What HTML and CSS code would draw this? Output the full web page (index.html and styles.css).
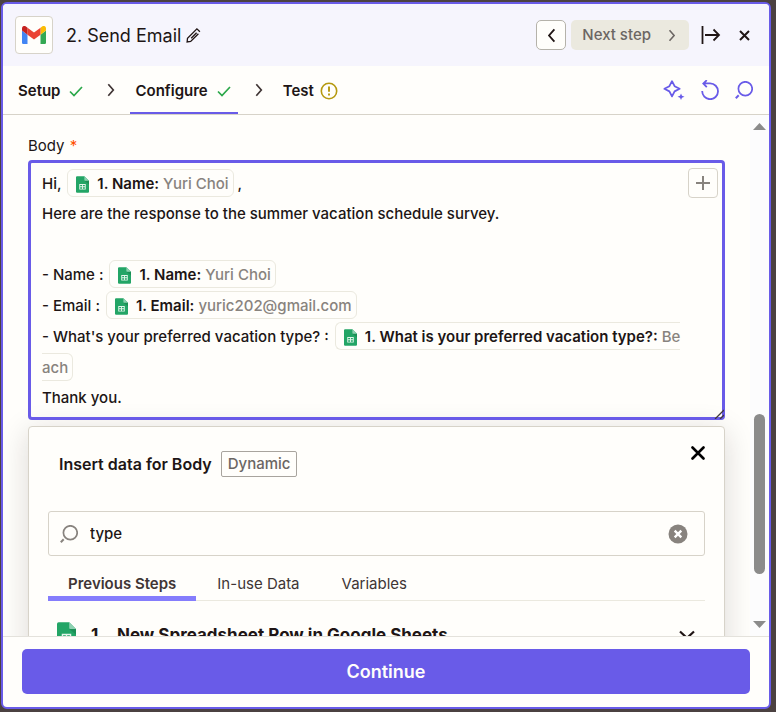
FILE: index.html
```html
<!DOCTYPE html>
<html lang="en">
<head>
<meta charset="utf-8">
<meta name="viewport" content="width=device-width, initial-scale=1">
<title>Send Email</title>
<link rel="stylesheet" href="styles.css">
</head>
<body>
<svg class="defs" aria-hidden="true">
  <symbol id="sheet" viewBox="0 0 14 18">
    <path fill="#23a566" d="M1.2 0H9l5 5v11.8a1.2 1.2 0 0 1-1.2 1.2H1.2A1.2 1.2 0 0 1 0 16.800V1.200A1.200 1.200 0 0 1 1.200 0z"/>
    <path fill="#1c8f56" d="M9 5h5v4z"/>
    <path fill="#8ed1b1" d="M9 0l5 5H9.800A.8.8 0 0 1 9 4.200z"/>
    <path fill="#e4f5ec" fill-rule="evenodd" d="M3.500 8.500h7v6h-7zM4.500 9.500v1.500h2V9.500zM7.500 9.500v1.500h2V9.500zM4.500 12v1.500h2V12zM7.500 12v1.500h2V12z"/>
  </symbol>
  <symbol id="check" viewBox="0 0 14 12"><path d="M1 6.500l4 4L13 2" fill="none" stroke="#2ba84a" stroke-width="1.700"/></symbol>
  <symbol id="chevron" viewBox="0 0 8 14"><path d="M1.300 1.300L6.300 7l-5 5.700" fill="none" stroke="currentColor" stroke-width="1.700"/></symbol>
  <symbol id="search" viewBox="0 0 18 18"><circle cx="10.300" cy="7.700" r="6.900" fill="none" stroke="currentColor" stroke-width="1.700"/><path d="M3.700 14.300L.8 17.200" stroke="currentColor" stroke-width="2"/></symbol>
</svg>
<main class="panel">
  <header class="header">
    <span class="app-logo">
      <svg width="24" height="18" viewBox="0 0 24 18" aria-hidden="true">
        <path fill="#4285f4" d="M1.600 18h3.900V8.700L0 4.600v11.800C0 17.300.7 18 1.600 18z"/>
        <path fill="#34a853" d="M18.500 18h3.900c.9 0 1.600-.7 1.600-1.600V4.600l-5.500 4.100z"/>
        <path fill="#fbbc04" d="M18.500 1.700v7L24 4.600V2.400c0-2-2.300-3.200-3.900-2z"/>
        <path fill="#ea4335" d="M5.500 8.700v-7L12 6.500l6.500-4.800v7L12 13.500z"/>
        <path fill="#c5221f" d="M0 2.400v2.200l5.500 4.100v-7L3.900.4C2.300-.8 0 .4 0 2.400z"/>
      </svg>
    </span>
    <h1 class="title"><span>2.</span><span>Send Email</span></h1>
    <button class="icon-btn rename" aria-label="Rename step">
      <svg width="15" height="15" viewBox="0 0 15 15" aria-hidden="true"><path d="M13.900 3.800L10.900.9 1.500 10.300 1.100 13.900l3.600-.4 7.700-7.700M5.200 10.200l5.400-5.400" fill="none" stroke="currentColor" stroke-width="1.300"/></svg>
    </button>
    <div class="header-actions">
      <button class="back-btn" aria-label="Previous step"><svg class="flip" width="9" height="15" aria-hidden="true"><use href="#chevron"/></svg></button>
      <button class="next-btn">Next step<svg width="8" height="13" aria-hidden="true"><use href="#chevron"/></svg></button>
      <button class="icon-btn collapse" aria-label="Collapse panel"><svg width="20" height="18" viewBox="0 0 20 18" aria-hidden="true"><path d="M1.500 0v18M4 9h14M12.500 3.500L18 9l-5.500 5.500" fill="none" stroke="currentColor" stroke-width="1.800"/></svg></button>
      <button class="icon-btn" aria-label="Close panel"><svg width="11" height="11" viewBox="0 0 11 11" aria-hidden="true"><path d="M1 1l9 9M10 1l-9 9" stroke="currentColor" stroke-width="2"/></svg></button>
    </div>
  </header>
  <nav class="steps" aria-label="Step sections">
    <a class="step" href="#setup">Setup<svg width="14" height="12" aria-hidden="true"><use href="#check"/></svg></a>
    <svg class="divider" width="8" height="14" aria-hidden="true"><use href="#chevron"/></svg>
    <a class="step active" href="#configure" aria-current="step">Configure<svg width="14" height="12" aria-hidden="true"><use href="#check"/></svg></a>
    <svg class="divider" width="8" height="14" aria-hidden="true"><use href="#chevron"/></svg>
    <a class="step warning" href="#test">Test<svg width="18" height="18" viewBox="0 0 18 18" aria-hidden="true"><circle cx="9" cy="9" r="7.700" fill="none" stroke="#b5990f" stroke-width="1.600"/><path d="M9 4.500v5.300M9 11.500v2" stroke="#b5990f" stroke-width="1.900"/></svg></a>
    <div class="tools">
      <button class="icon-btn" aria-label="Suggest with AI"><svg width="22" height="20" viewBox="0 0 22 20" aria-hidden="true"><path d="M9 1.200L11.600 6.200 16.600 8.800 11.600 11.400 9 16.400 6.400 11.400 1.400 8.800 6.400 6.200z" fill="none" stroke="currentColor" stroke-width="1.800" stroke-linejoin="round"/><path d="M18 13.500l1 2.200 2.500 1-2.500 1-1 2.300-1-2.300-2.500-1 2.500-1z" fill="currentColor"/></svg></button>
      <button class="icon-btn" aria-label="Undo"><svg width="18" height="20" viewBox="0 0 18 20" aria-hidden="true"><path d="M1.200 11a7.900 7.900 0 1 0 7.900-7.600H2M5.800.2L2.300 3.500l3.500 3.700" fill="none" stroke="currentColor" stroke-width="1.800"/></svg></button>
      <button class="icon-btn" aria-label="Search"><svg width="18" height="18" aria-hidden="true"><use href="#search"/></svg></button>
    </div>
  </nav>
  <div class="body">
    <section class="form">
      <div class="label" id="body-label">Body <span class="required">*</span></div>
      <div class="editor">
        <div class="text" contenteditable="true" role="textbox" aria-multiline="true" aria-labelledby="body-label" spellcheck="false">
          <p class="with-pill">Hi, <span class="pill"><svg width="13" height="17"><use href="#sheet"/></svg><b>1. Name:</b> <span class="value">Yuri Choi</span></span> ,</p>
          <p>Here are the response to the summer vacation schedule survey.</p>
          <p><br></p>
          <p class="with-pill">- Name : <span class="pill"><svg width="13" height="17"><use href="#sheet"/></svg><b>1. Name:</b> <span class="value">Yuri Choi</span></span></p>
          <p class="with-pill">- Email : <span class="pill"><svg width="13" height="17"><use href="#sheet"/></svg><b>1. Email:</b> <span class="value">yuric202@gmail.com</span></span></p>
          <p class="with-pill">- What's your preferred vacation type? : <span class="pill"><svg width="13" height="17"><use href="#sheet"/></svg><b>1. What is your preferred vacation type?:</b> <span class="value">Beach</span></span></p>
          <p>Thank you.</p>
        </div>
        <button class="add-btn" aria-label="Insert data"><svg width="14" height="14" viewBox="0 0 14 14" aria-hidden="true"><path d="M7 0v14M0 7h14" stroke="currentColor" stroke-width="2"/></svg></button>
        <svg class="grip" width="10" height="10" viewBox="0 0 10 10" aria-hidden="true"><path d="M1 10l9-9M6 10l4-4" stroke="#403838" stroke-width="1.300"/></svg>
      </div>
      <div class="picker">
        <div class="picker-head">
          <h2>Insert data for Body</h2><span class="badge">Dynamic</span>
          <button class="icon-btn picker-close" aria-label="Close picker"><svg width="14" height="14" viewBox="0 0 14 14" aria-hidden="true"><path d="M1.500 1.500l11 11M12.500 1.500l-11 11" stroke="currentColor" stroke-width="2.600" stroke-linecap="round"/></svg></button>
        </div>
        <div class="search">
          <svg width="18" height="18" aria-hidden="true"><use href="#search"/></svg>
          <input type="text" value="type" aria-label="Search data">
          <button class="icon-btn" aria-label="Clear search"><svg width="20" height="20" viewBox="0 0 20 20" aria-hidden="true"><circle cx="10" cy="10" r="9.500" fill="#88837e"/><path d="M6.700 6.700l6.600 6.600M13.300 6.700l-6.600 6.600" stroke="#fff" stroke-width="2.400"/></svg></button>
        </div>
        <div class="tabs" role="tablist">
          <button class="tab selected" role="tab" aria-selected="true">Previous Steps</button>
          <button class="tab" role="tab" aria-selected="false">In-use Data</button>
          <button class="tab" role="tab" aria-selected="false">Variables</button>
        </div>
        <button class="source" aria-expanded="false">
          <svg width="19" height="25" aria-hidden="true"><use href="#sheet"/></svg>
          <span class="source-number">1.</span><span>New Spreadsheet Row in Google Sheets</span>
          <svg class="expand" width="16" height="10" viewBox="0 0 16 10" aria-hidden="true"><path d="M1 1.500l7 6.500 7-6.500" fill="none" stroke="currentColor" stroke-width="2.200"/></svg>
        </button>
      </div>
    </section>
    <div class="scrollbar" aria-hidden="true">
      <svg width="13" height="7" viewBox="0 0 13 7"><path d="M0 7L6.500 0 13 7z" fill="#8b8b8b"/></svg>
      <div class="track"><div class="thumb"></div></div>
      <svg width="13" height="7" viewBox="0 0 13 7"><path d="M0 0L6.500 7 13 0z" fill="#8b8b8b"/></svg>
    </div>
  </div>
  <footer class="footer"><button class="continue">Continue</button></footer>
</main>
</body>
</html>
```
FILE: styles.css
```css
* { box-sizing: border-box; }

body {
  margin: 0;
  height: 100vh;
  padding: 2px 5px 3px 1px;
  background: #4b4141;
  color: #201515;
  font: 15px/20px Inter, "Liberation Sans", sans-serif;
}

button, input { font: inherit; color: inherit; }
button { margin: 0; padding: 0; border: 0; background: none; }
h1, h2, p { margin: 0; }
svg { display: block; flex: none; }
.defs { position: absolute; width: 0; height: 0; }
.icon-btn { display: flex; flex: none; }
.flip { transform: scaleX(-1); }

.panel {
  display: flex;
  flex-direction: column;
  height: 100%;
  overflow: hidden;
  border: 2px solid #695be8;
  border-radius: 6px;
  background: #fffefb;
}

.header {
  display: flex;
  align-items: center;
  flex: none;
  height: 62px;
  padding: 0 19px 0 12px;
  background: #f6f5fd;
}
.app-logo {
  display: grid;
  place-items: center;
  width: 38px;
  height: 38px;
  border: 1px solid #d7d3c9;
  border-radius: 4px;
  background: #fffefb;
}
.title {
  display: flex;
  gap: 5px;
  margin-left: 13px;
  padding-top: 2px;
  font-size: 18px;
  font-weight: 400;
  line-height: 24px;
}
.rename { margin-left: 5px; }
.header-actions { display: flex; align-items: center; margin-left: auto; }
.back-btn {
  display: grid;
  place-items: center;
  width: 30px;
  height: 30px;
  margin-right: 5px;
  border: 1px solid #b5b2aa;
  border-radius: 5px;
  background: #fffefb;
}
.next-btn {
  display: flex;
  align-items: center;
  gap: 17px;
  height: 30px;
  margin-right: 12px;
  padding: 0 13px 0 11px;
  border-radius: 5px;
  background: #ebe9df;
  color: #6b6663;
  font-weight: 500;
}
.collapse { margin-right: 18px; }

.steps {
  display: flex;
  align-items: center;
  flex: none;
  height: 49px;
  padding: 0 16px 0 10px;
  border-bottom: 1px solid #d7d3c9;
}
.step {
  display: flex;
  align-items: center;
  gap: 9px;
  align-self: stretch;
  padding: 4px 7px 0 5px;
  border-bottom: 2px solid transparent;
  color: inherit;
  font-weight: 600;
  text-decoration: none;
}
.step.active { border-color: #695be8; }
.step.warning { gap: 6px; }
.divider { margin: 0 15px 0 17px; color: #403535; }
.tools { display: flex; align-items: center; gap: 16px; margin-left: auto; color: #695be8; }

.body { display: flex; flex: 1; min-height: 0; }
.form { flex: 1; min-width: 0; padding: 21px 25px 0; overflow: hidden; }
.label { margin-bottom: 4px; }
.required { margin-left: 1px; color: #ff4f00; }

.editor {
  position: relative;
  padding: 5px 38px 4px 11px;
  border: 3px solid #695be8;
  border-radius: 4px;
}
.text { outline: none; line-height: 30px; font-weight: 500; }
.with-pill { line-height: 31px; }
.pill {
  margin: 0 0 0 2px;
  padding: 4px 4px 3px 8px;
  border: 1px solid #ebe9df;
  border-radius: 6px;
}
.pill svg { display: inline-block; margin-right: 8px; vertical-align: -4px; }
.pill b { font-weight: 600; }
.value { color: #88837e; word-break: break-all; }
.add-btn {
  position: absolute;
  top: 5px;
  right: 4px;
  display: grid;
  place-items: center;
  width: 30px;
  height: 30px;
  border: 1px solid #d7d3c9;
  border-radius: 4px;
  color: #88837e;
}
.grip { position: absolute; right: -2px; bottom: -2px; }

.picker {
  margin-top: 6px;
  padding: 16px 19px;
  border: 1px solid #d7d3c9;
  border-radius: 4px;
  background: #fffefb;
  box-shadow: 0 6px 30px rgba(32, 21, 21, 0.16);
}
.picker-head { display: flex; align-items: flex-end; padding: 8px 0 0 11px; }
.picker-head h2 { margin-right: 9px; font-size: 16px; font-weight: 600; line-height: 26px; }
.badge {
  padding: 2px 6px;
  border: 1px solid #a8a49e;
  border-radius: 2px;
  color: #6b6663;
  font-weight: 500;
}
.picker-close { align-self: flex-start; margin: -5px 0 0 auto; color: #000; }
.search {
  display: flex;
  align-items: center;
  gap: 12px;
  height: 45px;
  margin-top: 34px;
  padding: 0 16px 0 11px;
  border: 1px solid #d7d3c9;
  border-radius: 3px;
  color: #88837e;
}
.search input {
  flex: 1;
  min-width: 0;
  padding: 0;
  border: 0;
  outline: none;
  background: none;
  color: #201515;
  font-weight: 500;
}
.tabs { display: flex; margin-top: 12px; box-shadow: inset 0 -1px #ebe9df; }
.tab {
  padding: 6px 21px 2px;
  border-bottom: 5px solid transparent;
  color: #403535;
}
.tab.selected { padding: 6px 20px 2px; border-color: #857dfc; font-weight: 600; }
.source {
  display: flex;
  align-items: center;
  width: 100%;
  margin-top: 21px;
  padding: 0 10px 0 9px;
  font-size: 17px;
  font-weight: 700;
}
.source-number { margin: 0 13px 0 15px; }
.expand { margin-left: auto; }

.scrollbar {
  display: flex;
  flex: none;
  flex-direction: column;
  align-items: center;
  width: 19px;
  padding: 8px 0;
  background: #fcfcfd;
}
.track { display: flex; flex: 1; flex-direction: column; justify-content: flex-end; padding-bottom: 47px; }
.thumb { width: 11px; height: 36%; border-radius: 6px; background: #8b8b8b; }

.footer {
  flex: none;
  padding: 12px 19px 13px;
  border-top: 1px solid #e4e2dc;
}
.continue {
  display: block;
  width: 100%;
  height: 45px;
  border-radius: 5px;
  background: #695be8;
  color: #fffefb;
  font-size: 18px;
  font-weight: 600;
}
```
